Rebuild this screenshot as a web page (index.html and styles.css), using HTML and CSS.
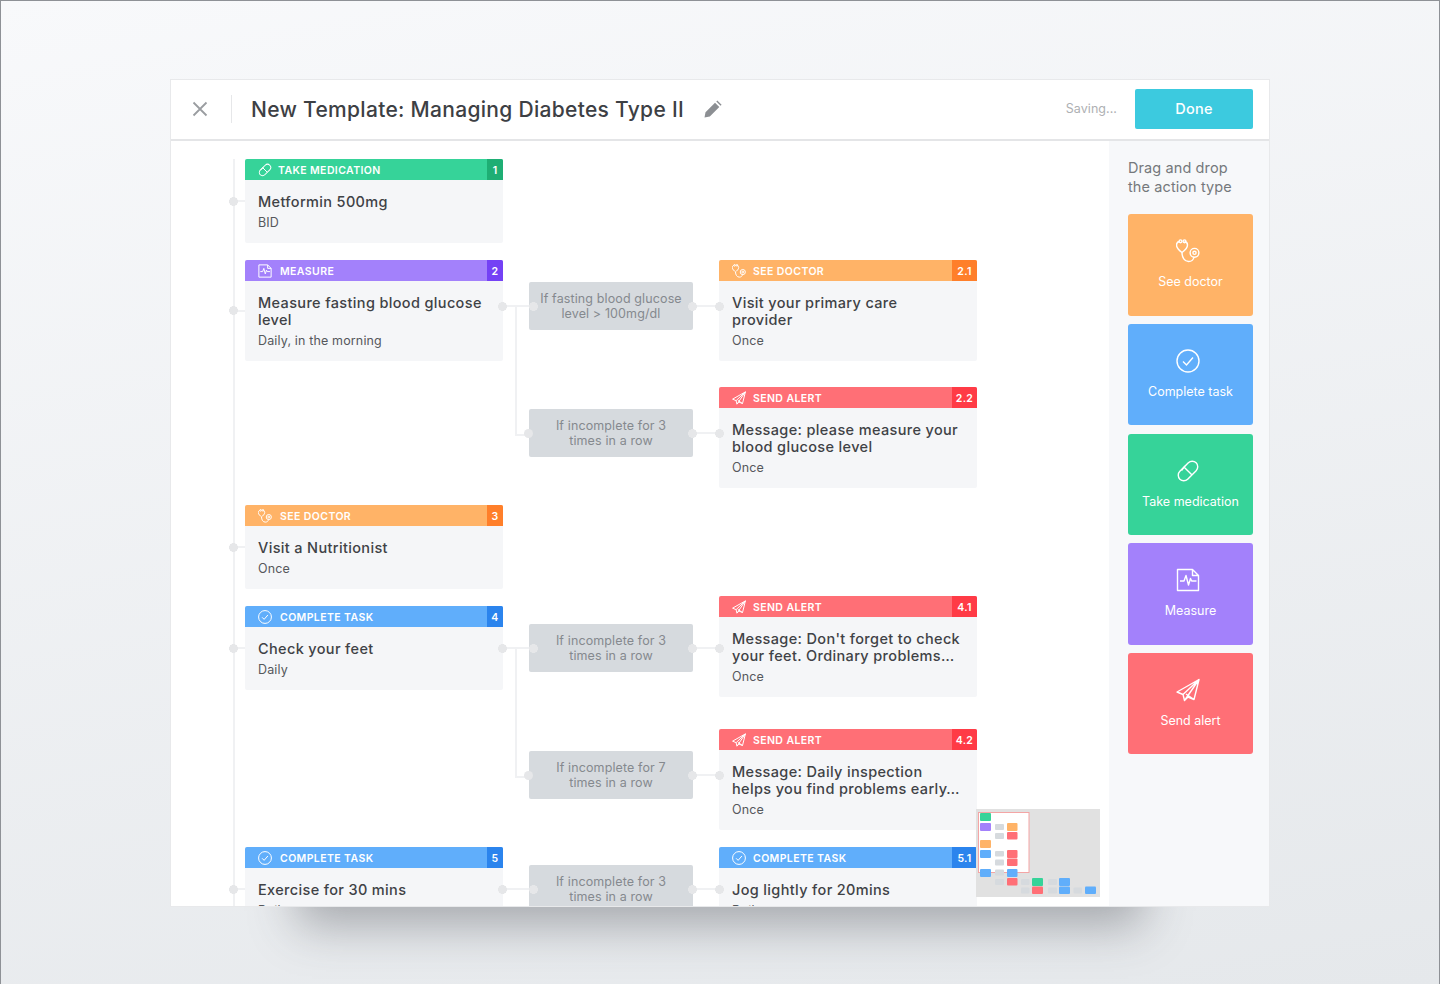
FILE: index.html
```html
<!DOCTYPE html>
<html lang="en">
<head>
  <meta charset="UTF-8" />
  <title>New Template: Managing Diabetes Type II</title>
  <link rel="stylesheet" href="styles.css">
</head>
<body>

  <svg class="icon-defs" width="0" height="0" aria-hidden="true">
    <symbol id="i-pill" viewBox="0 0 24 24">
      <g fill="none" stroke="currentColor">
        <rect x="0.500" y="6.500" width="23" height="11" rx="5.500" transform="rotate(-45 12 12)"/>
        <path d="M8.200 8.200l7.600 7.600M5.500 11.500l3.500-4.500"/>
      </g>
    </symbol>
    <symbol id="i-file" viewBox="0 0 24 24">
      <g fill="none" stroke="currentColor" stroke-linejoin="round">
        <path d="M1.500 1.500h15l6 6v15h-21z M16.500 1.500v6h6"/>
        <path d="M4 13h4l2-5.500 2.500 9.500 2-6.500 1.200 2.500h4.800"/>
      </g>
    </symbol>
    <symbol id="i-scope" viewBox="0 0 24 24">
      <g fill="none" stroke="currentColor">
        <path d="M3.500 2.500c-2 .3-3 1.500-3 3.500 0 3 3.500 6 5.500 7.500 2-1.500 5.500-4.500 5.500-7.500 0-2-1-3.200-3-3.500"/>
        <circle cx="4.500" cy="2.300" r="1.400"/>
        <circle cx="8.500" cy="2.300" r="1.400"/>
        <path d="M6 13.500c0 5 2.500 9 6.500 9 3 0 5-1.500 5.500-4.500"/>
        <circle cx="18.500" cy="13.800" r="4.400"/>
        <circle cx="18.500" cy="13.800" r="1.600"/>
      </g>
    </symbol>
    <symbol id="i-check" viewBox="0 0 24 24">
      <g fill="none" stroke="currentColor">
        <circle cx="12" cy="12" r="11"/>
        <path d="M7 12.500l3.500 3.500 6.500-7.500"/>
      </g>
    </symbol>
    <symbol id="i-plane" viewBox="0 0 24 24">
      <path d="M23 1.500L1 14l6 2.500 1.500 6 3.500-3.500 6 2.500z M23 1.500L7 16.500 M23 1.500L8.500 22.500 M10 16l8 5.500" fill="none" stroke="currentColor" stroke-linejoin="round"/>
    </symbol>
  </svg>

  <div class="window">
    <header class="topbar">
      <button class="close-btn" aria-label="Close">
        <svg width="16" height="16" viewBox="0 0 16 16"><path d="M1.500 1.500l13 13M14.500 1.500l-13 13" stroke="#9a9da1" stroke-width="1.800" fill="none"/></svg>
      </button>
      <h1 class="title">New Template: Managing Diabetes Type II</h1>
      <svg class="edit-icon" width="18" height="18" viewBox="0 0 18 18"><path d="M0.500 17.500l1-5.300L11 2.700l4.300 4.300L5.800 16.500zM12.300 1.400l1-1 4.300 4.300-1 1z" fill="#8c8f93"/></svg>
      <span class="saving">Saving...</span>
      <button class="done-btn">Done</button>
    </header>

    <div class="content">
      <main class="canvas">

        <div class="row row-first">
          <article class="card card-green main-node">
            <div class="card-head"><svg class="head-icon"><use href="#i-pill"/></svg><span class="head-label">Take medication</span><span class="step">1</span></div>
            <div class="card-body"><h3>Metformin 500mg</h3><p>BID</p></div>
          </article>
        </div>

        <div class="row">
          <article class="card card-purple main-node has-branch has-branch-low">
            <div class="card-head"><svg class="head-icon"><use href="#i-file"/></svg><span class="head-label">Measure</span><span class="step">2</span></div>
            <div class="card-body"><h3>Measure fasting blood glucose level</h3><p>Daily, in the morning</p></div>
          </article>
          <div class="branches">
            <div class="leaf leaf-low">
              <div class="cond">If fasting blood glucose level &gt; 100mg/dl</div>
              <article class="card card-orange">
                <div class="card-head"><svg class="head-icon"><use href="#i-scope"/></svg><span class="head-label">See doctor</span><span class="step">2.1</span></div>
                <div class="card-body"><h3>Visit your primary care<br>provider</h3><p>Once</p></div>
              </article>
            </div>
            <div class="leaf leaf-low leaf-joined">
              <div class="cond">If incomplete for 3 times in a row</div>
              <article class="card card-red">
                <div class="card-head"><svg class="head-icon"><use href="#i-plane"/></svg><span class="head-label">Send alert</span><span class="step">2.2</span></div>
                <div class="card-body"><h3>Message: please measure your<br>blood glucose level</h3><p>Once</p></div>
              </article>
            </div>
          </div>
        </div>

        <div class="row">
          <article class="card card-orange main-node">
            <div class="card-head"><svg class="head-icon"><use href="#i-scope"/></svg><span class="head-label">See doctor</span><span class="step">3</span></div>
            <div class="card-body"><h3>Visit a Nutritionist</h3><p>Once</p></div>
          </article>
        </div>

        <div class="row">
          <article class="card card-blue main-node has-branch">
            <div class="card-head"><svg class="head-icon"><use href="#i-check"/></svg><span class="head-label">Complete task</span><span class="step">4</span></div>
            <div class="card-body"><h3>Check your feet</h3><p>Daily</p></div>
          </article>
          <div class="branches branches-up">
            <div class="leaf leaf-shift">
              <div class="cond">If incomplete for 3 times in a row</div>
              <article class="card card-red">
                <div class="card-head"><svg class="head-icon"><use href="#i-plane"/></svg><span class="head-label">Send alert</span><span class="step">4.1</span></div>
                <div class="card-body"><h3>Message: Don't forget to check<br>your feet. Ordinary problems…</h3><p>Once</p></div>
              </article>
            </div>
            <div class="leaf leaf-low leaf-joined">
              <div class="cond">If incomplete for 7 times in a row</div>
              <article class="card card-red">
                <div class="card-head"><svg class="head-icon"><use href="#i-plane"/></svg><span class="head-label">Send alert</span><span class="step">4.2</span></div>
                <div class="card-body"><h3>Message: Daily inspection<br>helps you find problems early…</h3><p>Once</p></div>
              </article>
            </div>
          </div>
        </div>

        <div class="row">
          <article class="card card-blue main-node has-branch">
            <div class="card-head"><svg class="head-icon"><use href="#i-check"/></svg><span class="head-label">Complete task</span><span class="step">5</span></div>
            <div class="card-body"><h3>Exercise for 30 mins</h3><p>Daily</p></div>
          </article>
          <div class="branches">
            <div class="leaf">
              <div class="cond">If incomplete for 3 times in a row</div>
              <article class="card card-blue">
                <div class="card-head"><svg class="head-icon"><use href="#i-check"/></svg><span class="head-label">Complete task</span><span class="step">5.1</span></div>
                <div class="card-body"><h3>Jog lightly for 20mins</h3><p>Daily</p></div>
              </article>
            </div>
          </div>
        </div>

        <svg class="minimap" width="124" height="88" viewBox="0 0 124 88">
          <rect width="124" height="88" fill="#e1e1e1"/>
          <rect x="2.500" y="3.500" width="50.500" height="60" fill="#fff" stroke="#f4a5a5" stroke-width="1"/>
          <g fill="#36d399">
            <rect x="4" y="4" width="11" height="8" rx="1"/>
            <rect x="56" y="69" width="11" height="8" rx="1"/>
          </g>
          <g fill="#a381fb"><rect x="4" y="14" width="11" height="8" rx="1"/></g>
          <g fill="#ffb367">
            <rect x="31" y="14" width="10.500" height="8" rx="1"/>
            <rect x="4" y="31" width="11" height="8" rx="1"/>
          </g>
          <g fill="#ff6f76">
            <rect x="31" y="23" width="10.500" height="7.500" rx="1"/>
            <rect x="31" y="41" width="10.500" height="8" rx="1"/>
            <rect x="31" y="49.500" width="10.500" height="7.500" rx="1"/>
            <rect x="31" y="69" width="10.500" height="7.500" rx="1"/>
            <rect x="56" y="77.500" width="11" height="7.500" rx="1"/>
          </g>
          <g fill="#60aefb">
            <rect x="4" y="41" width="11" height="8" rx="1"/>
            <rect x="4" y="60" width="11" height="8" rx="1"/>
            <rect x="31" y="60" width="10.500" height="8" rx="1"/>
            <rect x="83" y="69" width="11" height="8" rx="1"/>
            <rect x="83" y="77.500" width="11" height="7.500" rx="1"/>
            <rect x="109" y="77.500" width="11" height="7.500" rx="1"/>
          </g>
          <g fill="#d6dade">
            <rect x="19" y="15" width="9" height="6" rx="1"/>
            <rect x="19" y="24" width="9" height="6" rx="1"/>
            <rect x="19" y="42" width="9" height="5.500" rx="1"/>
            <rect x="19" y="50.500" width="9" height="6" rx="1"/>
            <rect x="19" y="60.500" width="9" height="6" rx="1"/>
            <rect x="19" y="70" width="9" height="6" rx="1"/>
            <rect x="45" y="70" width="8.500" height="6" rx="1"/>
            <rect x="45" y="78.500" width="8.500" height="6" rx="1"/>
            <rect x="72" y="70" width="9" height="6" rx="1"/>
            <rect x="72" y="78.500" width="9" height="6" rx="1"/>
            <rect x="97.500" y="78.500" width="8.500" height="6" rx="1"/>
          </g>
        </svg>
      </main>

      <aside class="sidebar">
        <p class="hint">Drag and drop the action type</p>
        <div class="tile tile-orange"><svg class="tile-icon"><use href="#i-scope"/></svg><span>See doctor</span></div>
        <div class="tile tile-blue"><svg class="tile-icon"><use href="#i-check"/></svg><span>Complete task</span></div>
        <div class="tile tile-green"><svg class="tile-icon"><use href="#i-pill"/></svg><span>Take medication</span></div>
        <div class="tile tile-purple"><svg class="tile-icon"><use href="#i-file"/></svg><span>Measure</span></div>
        <div class="tile tile-red"><svg class="tile-icon"><use href="#i-plane"/></svg><span>Send alert</span></div>
      </aside>
    </div>
  </div>

</body>
</html>
```

FILE: styles.css
```css
* {
  box-sizing: border-box;
}

html, body {
  height: 100%;
}

body {
  margin: 0;
  padding-top: 78px;
  height: 984px;
  overflow: hidden;
  font-family: Inter, "Noto Sans", Arial, sans-serif;
  color: #3f4246;
  background: linear-gradient(170deg, #f8f9fb 0%, #e5e8eb 100%);
  border: 1px solid #8e9196;
  border-bottom: none;
}

.icon-defs {
  position: absolute;
}

.window {
  width: 1100px;
  height: 828px;
  margin-left: 169px;
  background: #fff;
  border: 1px solid #e8e9eb;
  display: flex;
  flex-direction: column;
  box-shadow: 0 146px 44px -127px rgba(60, 64, 70, 0.38);
}

/* top bar */
.topbar {
  height: 61px;
  flex: none;
  display: flex;
  align-items: center;
  border-bottom: 2px solid #e4e5e7;
  background: #fff;
}

.close-btn {
  width: 61px;
  height: 28px;
  background: none;
  border: none;
  border-right: 1px solid #e6e7e9;
  display: flex;
  align-items: center;
  justify-content: flex-start;
  padding: 0 0 0 21px;
  margin: 0 19px 1px 0;
}

.title {
  margin: 0;
  font-size: 21px;
  font-weight: 500;
  letter-spacing: 0.3px;
  color: #3d4044;
}

.edit-icon {
  margin: 0 0 1px 20px;
}

.saving {
  margin: 0 0 2px auto;
  font-size: 12.500px;
  letter-spacing: 0.05px;
  color: #aeb0b3;
}

.done-btn {
  width: 118px;
  height: 40px;
  margin: 0 16px 2px 18px;
  border: none;
  border-radius: 2px;
  background: #3ccadf;
  color: #fff;
  font-family: inherit;
  font-size: 14.500px;
  font-weight: 500;
  letter-spacing: 0.2px;
}

.content {
  flex: 1;
  display: flex;
  min-height: 0;
}

/* diagram */
.canvas {
  position: relative;
  flex: 1;
  overflow: hidden;
  padding: 18px 0 0 74px;
}

.canvas::before {
  content: "";
  position: absolute;
  left: 62px;
  top: 18px;
  bottom: 0;
  width: 2px;
  background: #f0f1f3;
}

.row {
  display: flex;
  align-items: flex-start;
  gap: 26px;
  margin-top: 17px;
}

.row-first {
  margin-top: 0;
}

.branches {
  display: flex;
  flex-direction: column;
  gap: 26px;
  position: relative;
}

.branches-up {
  margin-top: -10px;
  gap: 32px;
}

.leaf {
  position: relative;
  display: flex;
  align-items: flex-start;
  gap: 26px;
}

.card {
  position: relative;
  width: 258px;
  flex: none;
  background: #f5f6f8;
  border-radius: 2px;
}

.card-head {
  height: 21px;
  display: flex;
  align-items: center;
  padding-left: 13px;
  color: #fff;
  border-radius: 2px 2px 0 0;
  overflow: hidden;
}

.head-icon {
  width: 14px;
  height: 14px;
  flex: none;
  margin-right: 7px;
  stroke-width: 1.700;
}

.main-node .head-icon {
  margin-right: 8px;
}

.card-green.main-node .head-icon {
  margin-right: 6px;
}

.head-label {
  flex: 1;
  padding-top: 1px;
  font-size: 10.500px;
  font-weight: 600;
  text-transform: uppercase;
  letter-spacing: 0.4px;
}

.step {
  width: 16px;
  height: 21px;
  padding-top: 1px;
  line-height: 21px;
  text-align: center;
  font-size: 10.500px;
  font-weight: 600;
  letter-spacing: 0.3px;
}

.leaf .step {
  width: 25px;
}

.card-green .card-head { background: #36d399; }
.card-green .step { background: #1eae74; }
.card-purple .card-head { background: #a381fb; }
.card-purple .step { background: #7441f5; }
.card-orange .card-head { background: #ffb367; }
.card-orange .step { background: #ff7f2a; }
.card-blue .card-head { background: #60aefb; }
.card-blue .step { background: #2b84ed; }
.card-red .card-head { background: #ff6f76; }
.card-red .step { background: #ff3b46; }

.card-body {
  padding: 13px 13px 12px;
}

.card-body h3 {
  margin: 0;
  font-size: 14.500px;
  line-height: 17px;
  font-weight: 500;
  letter-spacing: 0.35px;
  color: #3f4246;
}

.card-body p {
  margin: 4px 0 0;
  font-size: 12.500px;
  line-height: 17px;
  letter-spacing: 0.15px;
  color: #55585c;
}

.cond {
  width: 164px;
  height: 48px;
  flex: none;
  margin-top: 18px;
  padding: 9px 10px 0;
  background: #d6dade;
  border-radius: 2px;
  text-align: center;
  font-size: 12.500px;
  line-height: 15px;
  letter-spacing: 0.12px;
  color: #85898e;
}

.leaf-low .cond {
  margin-top: 22px;
}

.leaf-shift .cond {
  margin-top: 28px;
}

/* connector dots and lines */
.main-node::before {
  content: "";
  position: absolute;
  left: -16px;
  top: 50%;
  width: 16px;
  height: 9px;
  margin-top: -4.500px;
  background:
    radial-gradient(circle 4.500px at 4.500px 4.500px, #e6e7e9 98%, transparent) no-repeat,
    linear-gradient(#f0f1f3, #f0f1f3) no-repeat 0 3.500px / 100% 2px;
}

.has-branch::after {
  content: "";
  position: absolute;
  left: 100%;
  top: 37.500px;
  width: 40px;
  height: 9px;
  margin-left: -5px;
  background:
    radial-gradient(circle 4.500px at 4.500px 4.500px, #e6e7e9 98%, transparent) no-repeat,
    radial-gradient(circle 4.500px at 35.500px 4.500px, #e6e7e9 98%, transparent) no-repeat,
    linear-gradient(#f0f1f3, #f0f1f3) no-repeat 0 3.500px / 100% 2px;
  z-index: 1;
}

.has-branch-low::after {
  top: 41.500px;
}

.leaf::after {
  content: "";
  position: absolute;
  left: 159px;
  top: 37.500px;
  width: 36px;
  height: 9px;
  background:
    radial-gradient(circle 4.500px at 4.500px 4.500px, #e6e7e9 98%, transparent) no-repeat,
    radial-gradient(circle 4.500px at 31.500px 4.500px, #e6e7e9 98%, transparent) no-repeat,
    linear-gradient(#f0f1f3, #f0f1f3) no-repeat 0 3.500px / 100% 2px;
}

.leaf-low::after {
  top: 41.500px;
}

.leaf-shift::after {
  top: 47.500px;
}

.leaf-joined::before {
  content: "";
  position: absolute;
  left: -14px;
  top: -81px;
  width: 16px;
  height: 128px;
  border-left: 2px solid #f0f1f3;
  border-bottom: 2px solid #f0f1f3;
}

.leaf-joined .cond {
  position: relative;
}

.leaf-joined .cond::before {
  content: "";
  position: absolute;
  left: -5px;
  top: 19.500px;
  width: 9px;
  height: 9px;
  border-radius: 50%;
  background: #e6e7e9;
}

.minimap {
  position: absolute;
  left: 805px;
  top: 668px;
}

/* action palette */
.sidebar {
  width: 160px;
  flex: none;
  background: #f7f8fa;
  padding: 17px 16px 0 19px;
}

.hint {
  margin: 0 0 18.400px;
  font-size: 14.500px;
  line-height: 19px;
  letter-spacing: 0.1px;
  color: #75787c;
}

.tile {
  height: 101.300px;
  margin-bottom: 8.400px;
  border-radius: 3px;
  display: flex;
  flex-direction: column;
  align-items: center;
  color: #fff;
  font-size: 12.500px;
  padding-top: 25px;
}

.tile span {
  margin-top: 11px;
}

.tile-icon {
  width: 24px;
  height: 24px;
  margin-right: 5px;
  color: #fff;
  stroke-width: 1.400;
}

.tile-orange { background: #ffb367; }
.tile-blue { background: #60aefb; }
.tile-green { background: #36d399; }
.tile-purple { background: #a381fb; }
.tile-red { background: #ff6f76; }
```
